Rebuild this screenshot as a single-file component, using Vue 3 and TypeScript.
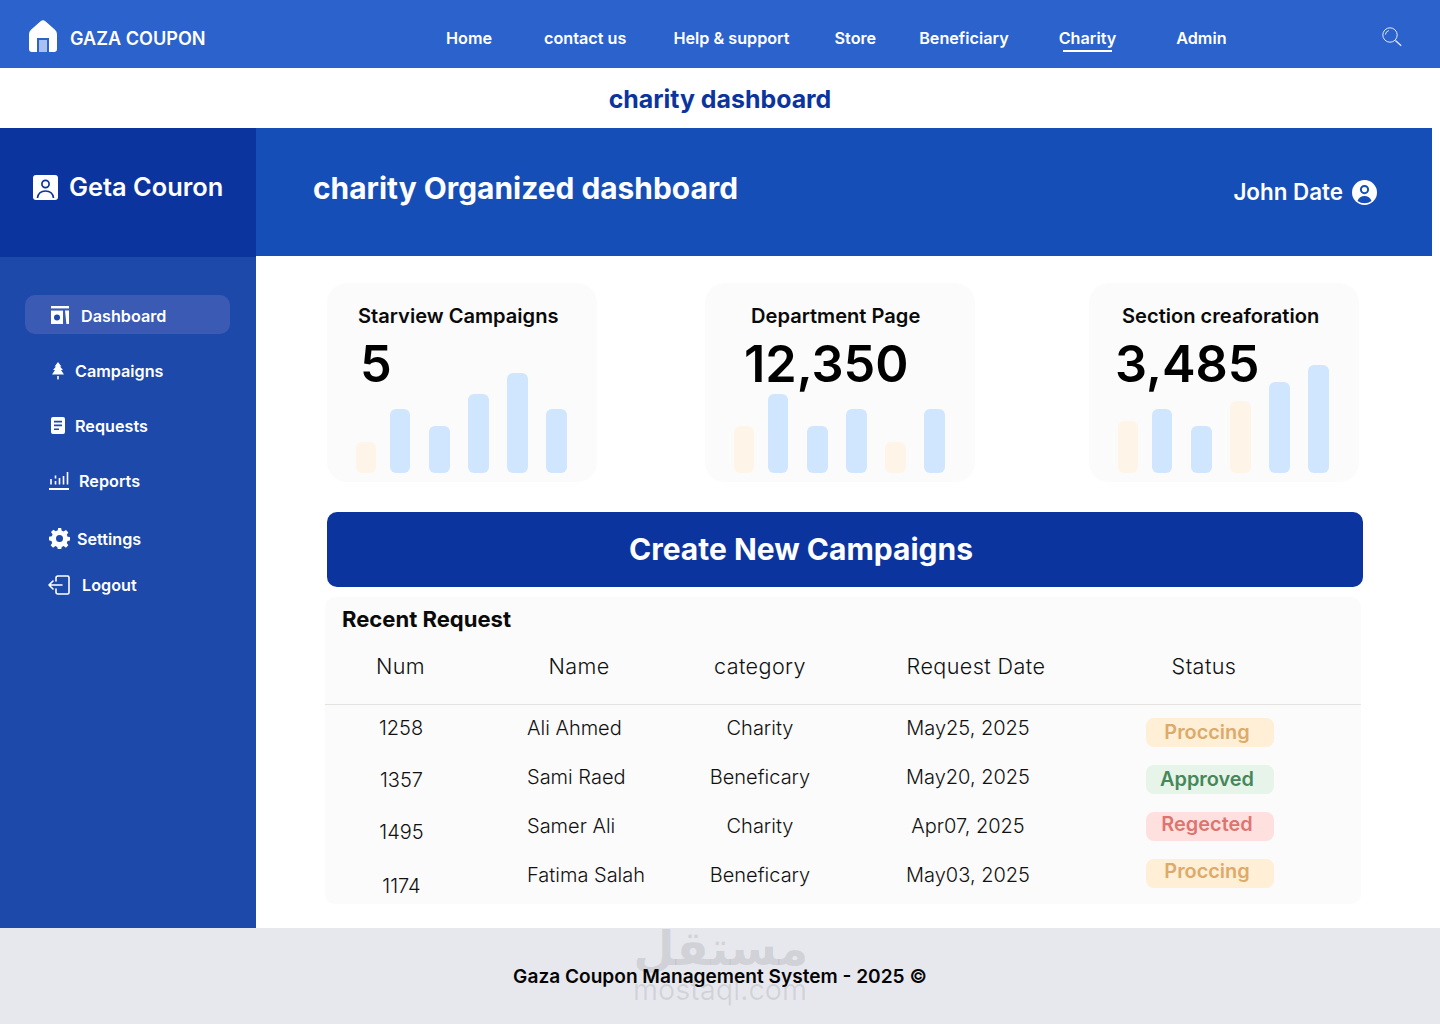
<script setup lang="ts">
interface Bar { h: number; warm?: boolean }
interface Stat { key: string; title: string; value: string; bars: Bar[] }
const stats: Stat[] = [
  { key: 'a', title: 'Starview Campaigns', value: '5', bars: [{ h: 31, warm: true }, { h: 64 }, { h: 47 }, { h: 79 }, { h: 100 }, { h: 64 }] },
  { key: 'b', title: 'Department Page', value: '12,350', bars: [{ h: 47, warm: true }, { h: 79 }, { h: 47 }, { h: 64 }, { h: 31, warm: true }, { h: 64 }] },
  { key: 'c', title: 'Section creaforation', value: '3,485', bars: [{ h: 52, warm: true }, { h: 64 }, { h: 47 }, { h: 72, warm: true }, { h: 91 }, { h: 108 }] },
]
const navItems = ['Home', 'contact us', 'Help & support', 'Store', 'Beneficiary', 'Charity', 'Admin']
const nums = ['1258', '1357', '1495', '1174']
const names = ['Ali Ahmed', 'Sami Raed', 'Samer Ali', 'Fatima Salah']
const categories = ['Charity', 'Beneficary', 'Charity', 'Beneficary']
const dates = ['May25, 2025', 'May20, 2025', 'Apr07, 2025', 'May03, 2025']
const statuses = [
  { label: 'Proccing', cls: 'wait' },
  { label: 'Approved', cls: 'ok' },
  { label: 'Regected', cls: 'bad' },
  { label: 'Proccing', cls: 'wait' },
]
</script>

<template>
  <div class="page">
    <header class="topbar">
      <div class="brand">
        <svg class="house" viewBox="0 0 28 32" width="28" height="32">
          <path d="M11.6 1.2a3.6 3.6 0 0 1 4.8 0l9.6 8.6A6 6 0 0 1 28 14.3V29a3 3 0 0 1-3 3H3a3 3 0 0 1-3-3V14.3a6 6 0 0 1 2-4.5z" fill="#fff" />
          <rect x="8" y="18" width="12" height="14" fill="#2c62cc" />
          <rect x="10" y="20" width="8" height="12" fill="#a8c0ee" />
        </svg>
        <span>GAZA COUPON</span>
      </div>
      <nav class="topnav">
        <a v-for="n in navItems" :key="n" :class="{ active: n === 'Charity' }">{{ n }}</a>
      </nav>
      <svg class="search" viewBox="0 0 20 20" width="20" height="20" fill="none" stroke="#dfe8f8" stroke-width="1">
        <circle cx="8" cy="8" r="7.2" />
        <path d="M3.4 7.6A4.6 4.6 0 0 1 6.8 3.6" />
        <path d="M13.4 13.4l5.8 5.4" stroke-width="1.4" />
      </svg>
    </header>

    <div class="pagetitle">charity dashboard</div>

    <div class="body">
      <aside class="side">
        <div class="side-head">
          <svg viewBox="0 0 25 25" width="25" height="25">
            <rect width="25" height="25" rx="3" fill="#fff" />
            <circle cx="12.5" cy="9" r="3.6" fill="none" stroke="#0c349e" stroke-width="1.7" />
            <path d="M4.5 23c.6-4.6 3.8-7 8-7s7.4 2.4 8 7" fill="none" stroke="#0c349e" stroke-width="1.7" />
          </svg>
          <span>Geta Couron</span>
        </div>
        <ul class="side-nav">
          <li class="current">
            <svg viewBox="0 0 18 18" width="18" height="18">
              <path d="M0 0h18v2.4H0z" fill="#fff" />
              <path d="M0 4.6h12V18H0z" fill="#fff" />
              <circle cx="6" cy="11.4" r="3" fill="#1d49ab" />
              <path d="M14 4.6h4V18h-2.6z" fill="#fff" />
            </svg>
            <span>Dashboard</span>
          </li>
          <li class="campaigns">
            <svg viewBox="0 0 12 18" width="12" height="18" fill="#fff">
              <path d="M6 0l3.4 4.4H8L11 8H9l3 4.4H0L3 8H1l3-3.6H2.6z" />
              <rect x="5.2" y="14" width="1.6" height="3.4" />
            </svg>
            <span>Campaigns</span>
          </li>
          <li class="requests">
            <svg viewBox="0 0 14 17" width="14" height="17">
              <rect width="14" height="17" rx="2" fill="#fff" />
              <path d="M3 4.6h8M3 8.4h8M3 12.2h5" stroke="#1d49ab" stroke-width="1.6" />
            </svg>
            <span>Requests</span>
          </li>
          <li class="reports">
            <svg viewBox="0 0 20 18" width="20" height="18" fill="none" stroke="#fff">
              <path d="M0 17h20" stroke-width="2" />
              <path d="M2 7v5.5M6.5 3.5v3M6.5 9v3.5M10.5 6v6.500M14.500 4v8.500M18.500 0v12.500" stroke-width="1.6" />
            </svg>
            <span>Reports</span>
          </li>
          <li class="settings">
            <svg viewBox="0 0 24 24" width="21" height="21">
              <path fill="#fff" fill-rule="evenodd" d="M13.9 0l.6 3.2c.8.2 1.5.5 2.2.9l2.7-1.8 2.7 2.7-1.8 2.7c.4.7.7 1.4.9 2.2l3.2.6v3.8l-3.2.6c-.2.8-.5 1.5-.9 2.2l1.8 2.7-2.7 2.7-2.7-1.8c-.7.4-1.4.7-2.2.9l-.6 3.2h-3.8l-.6-3.2c-.8-.2-1.5-.5-2.2-.9l-2.7 1.8-2.7-2.7 1.8-2.7c-.4-.7-.7-1.4-.9-2.2L0 13.900v-3.800l3.200-.6c.2-.8.5-1.500.9-2.200L2.300 4.600 5 1.900l2.700 1.800c.7-.4 1.400-.7 2.200-.9l.6-2.800zM12 8a4 4 0 1 0 0 8 4 4 0 0 0 0-8z" />
            </svg>
            <span>Settings</span>
          </li>
          <li class="logout">
            <svg viewBox="0 0 22 20" width="22" height="20" fill="none" stroke="#fff" stroke-width="1.6" stroke-linecap="round" stroke-linejoin="round">
              <path d="M8 6V3a2 2 0 0 1 2-2h9.500a1.500 1.500 0 0 1 1.500 1.500v15a1.500 1.500 0 0 1-1.500 1.500H10a2 2 0 0 1-2-2v-3" />
              <path d="M14 10H1M5 6l-4 4 4 4" />
            </svg>
            <span>Logout</span>
          </li>
        </ul>
      </aside>

      <div class="content">
        <div class="banner">
          <h1>charity Organized dashboard</h1>
          <div class="user">
            <span>John Date</span>
            <svg viewBox="0 0 25 25" width="25" height="25">
              <circle cx="12.500" cy="12.500" r="12.500" fill="#fff" />
              <circle cx="12.500" cy="9.600" r="3.600" fill="none" stroke="#164eb8" stroke-width="2" />
              <path d="M5.500 21c1.200-3.400 3.800-5 7-5s5.800 1.600 7 5a12 12 0 0 1-14 0z" fill="#164eb8" />
            </svg>
          </div>
        </div>

        <main class="main">
          <section class="cards">
            <article v-for="s in stats" :key="s.key" class="card" :class="'card-' + s.key">
              <div class="chart">
                <i v-for="(b, i) in s.bars" :key="i" :class="{ warm: b.warm }" :style="{ height: b.h + 'px' }"></i>
              </div>
              <div class="card-text">
                <h3>{{ s.title }}</h3>
                <p>{{ s.value }}</p>
              </div>
            </article>
          </section>

          <button class="create">Create New Campaigns</button>

          <section class="recent">
            <h2>Recent Request</h2>
            <div class="cols">
              <div class="col col-num">
                <div class="th">Num</div>
                <div class="td" v-for="n in nums" :key="n">{{ n }}</div>
              </div>
              <div class="col col-name">
                <div class="th">Name</div>
                <div class="td" v-for="n in names" :key="n">{{ n }}</div>
              </div>
              <div class="col col-cat">
                <div class="th">category</div>
                <div class="td" v-for="(c, i) in categories" :key="i">{{ c }}</div>
              </div>
              <div class="col col-date">
                <div class="th">Request Date</div>
                <div class="td" v-for="d in dates" :key="d">{{ d }}</div>
              </div>
              <div class="col col-status">
                <div class="th">Status</div>
                <div class="pill" v-for="(s, i) in statuses" :key="i" :class="s.cls">{{ s.label }}</div>
              </div>
            </div>
          </section>
        </main>
      </div>
    </div>

    <footer class="footer">
      <span>Gaza Coupon Management System - 2025 ©</span>
      <div class="mark">
        <b>مستقل</b>
        <em>mostaql.com</em>
      </div>
    </footer>
  </div>
</template>

<style>
html, body { margin: 0; padding: 0; background: #fff; }
</style>

<style scoped>
.page {
  width: 1440px;
  height: 1024px;
  display: flex;
  flex-direction: column;
  overflow: hidden;
  font-family: Inter, "Liberation Sans", sans-serif;
  background: #fff;
}
.topbar {
  height: 68px;
  box-sizing: border-box;
  flex: none;
  background: #2c62cc;
  display: flex;
  align-items: center;
  padding: 8px 0 0 29px;
  color: #fff;
}
.brand {
  display: flex;
  align-items: center;
  gap: 13px;
  width: 417px;
  font-size: 18.1px;
  font-weight: 600;
}
.house { margin-top: -4px; }
.topnav {
  display: flex;
  font-size: 16.2px;
  font-weight: 600;
  width: 936px;
}
.topnav a { position: relative; white-space: nowrap; }
.topnav a:nth-child(2) { margin-left: 52px; }
.topnav a:nth-child(3) { margin-left: 47px; }
.topnav a:nth-child(4) { margin-left: 45px; }
.topnav a:nth-child(5) { margin-left: 43px; }
.topnav a:nth-child(6) { margin-left: 50px; }
.topnav a:nth-child(7) { margin-left: 60px; }
.topnav a.active::after {
  content: "";
  position: absolute;
  left: 4px;
  right: 4px;
  bottom: -4px;
  height: 2px;
  background: #fff;
}
.search { margin-top: -3px; }
.pagetitle {
  height: 60px;
  box-sizing: border-box;
  padding-top: 2px;
  flex: none;
  display: flex;
  align-items: center;
  justify-content: center;
  font-size: 24.9px;
  font-weight: 700;
  color: #0c349e;
}
.body { flex: 1; display: flex; min-height: 0; }
.side {
  width: 256px;
  flex: none;
  background: #1d49ab;
  color: #fff;
}
.side-head {
  height: 129px;
  box-sizing: border-box;
  background: #0c349e;
  display: flex;
  align-items: flex-start;
  gap: 11px;
  padding: 47px 0 0 33px;
  font-size: 25.4px;
  font-weight: 600;
}
.side-head span { line-height: 24px; }
.side-nav {
  list-style: none;
  margin: 0;
  padding: 38px 0 0 25px;
  font-size: 16.2px;
  font-weight: 600;
}
.side-nav li {
  width: 205px;
  height: 39px;
  box-sizing: border-box;
  display: flex;
  align-items: center;
  margin-top: 16px;
  padding-left: 26px;
  border-radius: 10px;
}
.side-nav li.current {
  margin-top: 0;
  background: #3a5ab4;
  gap: 12px;
}
.side-nav li.current span { padding-top: 3px; }
.side-nav li.campaigns { gap: 11px; padding-left: 27px; margin-top: 17px; }
.side-nav li.requests { gap: 10px; }
.side-nav li.reports { gap: 10px; padding-left: 24px; }
.side-nav li.settings { gap: 7px; padding-left: 24px; margin-top: 19px; }
.side-nav li.logout { gap: 12px; padding-left: 23px; margin-top: 7px; }
.content { flex: 1; display: flex; flex-direction: column; min-width: 0; }
.banner {
  height: 128px;
  flex: none;
  width: 1176px;
  box-sizing: border-box;
  background: #164eb8;
  color: #fff;
  display: flex;
  justify-content: space-between;
  padding: 43px 55px 0 57px;
}
.banner h1 {
  margin: -1px 0 0;
  font-size: 29.9px;
  font-weight: 700;
  line-height: 36px;
}
.user {
  display: flex;
  align-items: center;
  gap: 9px;
  height: 42px;
  font-size: 22.4px;
  font-weight: 600;
}
.user span { margin-top: -1px; }
.main { flex: 1; padding: 27px 0 0 69px; }
.cards { display: flex; height: 199px; margin-left: 2px; }
.card {
  width: 270px;
  height: 199px;
  box-sizing: border-box;
  display: grid;
  background: #fbfbfb;
  border-radius: 20px;
}
.card-b { margin-left: 108px; }
.card-c { margin-left: 114px; }
.card > * { grid-area: 1 / 1; }
.chart {
  display: flex;
  align-items: flex-end;
  gap: 18px;
  padding: 0 0 9px 29px;
}
.chart i {
  display: block;
  flex: none;
  width: 21px;
  background: #cfe6fe;
  border-radius: 6px;
}
.chart i.warm { background: #fff4e8; }
.chart i:nth-child(1), .chart i:nth-child(2) { width: 20px; }
.chart i:nth-child(1) { margin-right: -4px; }
.chart i:nth-child(2) { margin-right: 1px; }
.card-text { padding-top: 19px; }
.card-text h3 {
  margin: 0;
  font-size: 20.1px;
  font-weight: 600;
  line-height: 28px;
  color: #0a0a0a;
}
.card-text p {
  margin: 6px 0 0;
  font-size: 50.400px;
  font-weight: 600;
  line-height: 56px;
  color: #000;
}
.card-a h3 { padding-left: 31px; }
.card-a p { padding-left: 33px; }
.card-b h3 { padding-left: 46px; }
.card-b p { padding-left: 39px; }
.card-c h3 { padding-left: 33px; }
.card-c p { padding-left: 26px; }
.create {
  display: block;
  width: 1036px;
  height: 75px;
  margin: 30px 0 0 2px;
  border: 0;
  padding: 0 88px 2px 0;
  border-radius: 10px;
  background: #0c349e;
  color: #fff;
  font-family: inherit;
  font-size: 30px;
  font-weight: 700;
}
.recent {
  width: 1036px;
  height: 307px;
  margin-top: 10px;
  background: #fbfbfb;
  border-radius: 10px;
}
.recent h2 {
  margin: 0;
  padding: 8px 0 0 17px;
  height: 36px;
  box-sizing: border-box;
  font-size: 22.05px;
  font-weight: 700;
  line-height: 28px;
  color: #0a0a0a;
}
.cols { display: flex; }
.col { flex: none; text-align: center; font-size: 20px; font-weight: 300; color: #111; }
.th {
  height: 72px;
  box-sizing: border-box;
  padding-top: 19px;
  line-height: 28px;
  font-size: 21.6px;
  letter-spacing: 0.4px;
  border-bottom: 1px solid #e6e2e0;
}
.td { line-height: 28px; white-space: nowrap; }
.col-num { width: 152px; }
.col-name { width: 204px; }
.col-cat { width: 158px; }
.col-date { width: 258px; }
.col-status { width: 264px; }
.col-num .th { padding-right: 1px; }
.col-name .td { text-align: left; padding-left: 50px; }
.col-date .th { padding-left: 16px; }
.col-status .th { padding-right: 50px; }
.td { margin-top: 24px; }
.th + .td { margin-top: 9px; }
.col-num .td { margin-top: 24px; padding-left: 1px; }
.col-num .th + .td { margin-top: 9px; padding-left: 0; }
.col-num .td:last-child { margin-top: 26px; }
.col-name .td, .col-cat .td, .col-date .td { margin-top: 21px; }
.col-name .th + .td, .col-cat .th + .td, .col-date .th + .td { margin-top: 9px; }
.pill {
  width: 128px;
  height: 29px;
  box-sizing: border-box;
  padding-right: 6px;
  margin: 18px 0 0 49px;
  border-radius: 8px;
  font-size: 19.9px;
  font-weight: 600;
  line-height: 29px;
  text-align: center;
}
.th + .pill { margin-top: 13px; }
.pill.wait { background: #ffefd6; color: #dcab6b; }
.pill.ok { background: #e6f4ea; color: #46875a; }
.pill.bad { background: #fee1df; color: #de7470; line-height: 25px; }
.pill.wait:last-child { line-height: 25px; }
.footer {
  position: relative;
  height: 96px;
  flex: none;
  background: #e7e8ee;
  display: flex;
  align-items: center;
  justify-content: center;
  font-size: 19.1px;
  font-weight: 600;
  color: #050505;
}
.footer span { position: relative; z-index: 1; }
.mark {
  position: absolute;
  left: 633px;
  top: -8px;
  width: 173px;
  text-align: center;
  color: rgba(0, 0, 0, 0.09);
}
.mark b {
  display: block;
  font-family: "DejaVu Sans", sans-serif;
  font-size: 48px;
  line-height: 56px;
  font-weight: 700;
}
.mark em {
  display: block;
  font-style: normal;
  font-size: 28.600px;
  line-height: 28px;
  font-weight: 400;
}
</style>
